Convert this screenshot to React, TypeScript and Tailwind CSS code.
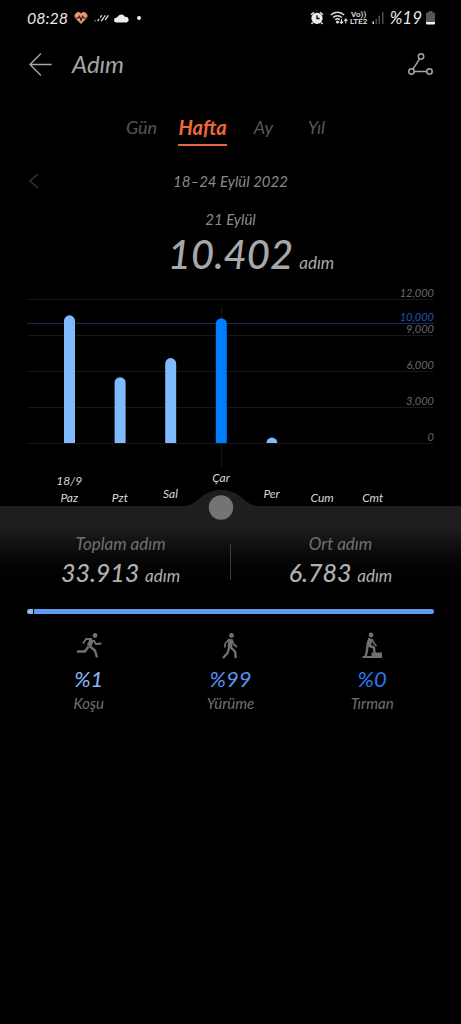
import { ReactNode, useState } from "react";
import clsx from "clsx";

const TABS = [
  { label: "Gün", width: "w-[58px]" },
  { label: "Hafta", width: "w-16" },
  { label: "Ay", width: "w-[58px]" },
  { label: "Yıl", width: "w-12" },
];

const DAYS = [
  { label: "Paz", date: "18/9", steps: 10640, lift: "pb-0" },
  { label: "Pzt", steps: 5480, lift: "pb-0" },
  { label: "Sal", steps: 7080, lift: "pb-1" },
  { label: "Çar", steps: 10402, lift: "pb-5", selected: true },
  { label: "Per", steps: 450, lift: "pb-1" },
  { label: "Cum", steps: 0, lift: "pb-0" },
  { label: "Cmt", steps: 0, lift: "pb-0" },
];

const TICKS = [12000, 9000, 6000, 3000, 0];
const GOAL = 10000;

// chart units: 3000 steps are 36 units high
const BASELINE = 160;
const toY = (steps: number) => BASELINE - (steps / 3000) * 36;
const format = (value: number) => value.toLocaleString("en-US");

function barPath(index: number, steps: number) {
  const x = 37 + index * 50.6;
  const top = toY(steps);
  const r = Math.min(5.5, BASELINE - top);
  return `M${x} ${BASELINE}V${top + r}a5.5 ${r} 0 0 1 11 0V${BASELINE}z`;
}

function StatusBar() {
  return (
    <div className="flex h-[35px] items-center justify-between pr-[26px] pl-[27px] text-[#e8e8e8]">
      <div className="flex items-center">
        <span className="w-[47px] text-base">08:28</span>
        <svg className="h-3.5 w-[14px]" viewBox="0 0 14 14" aria-hidden="true">
          <path d="M7 13 1.6 7.4A3.5 3.5 0 0 1 7 2.5a3.5 3.5 0 0 1 5.4 4.9z" fill="#e39a70" />
          <path d="M0 7h4.3l1.2-1.8L7 9.3l1.6-4 1 1.7H14" fill="none" stroke="#3b1d14" strokeWidth="1.2" />
        </svg>
        <svg className="ml-1.5 h-3 w-4" viewBox="0 0 16 12" stroke="#d8d8d8" strokeWidth="1.3" strokeLinecap="round" aria-hidden="true">
          <path d="M1 8.8h.1M4 8.5l.8-1.1M6.5 5l1-1.3M7.5 8.8l2.2-3.2M10.5 4.5l.5-.7M11.5 7.5l2.7-3.8" />
        </svg>
        <svg className="ml-1 h-3 w-[15px]" viewBox="0 0 15 12" fill="#ececec" aria-hidden="true">
          <path d="M2.5 10.500a2.400 2.400 0 0 1-.2-4.800 2.400 2.400 0 0 1 1.700-1.200A3.800 3.800 0 0 1 11 5a2.800 2.800 0 0 1 1.500 5.500z" />
        </svg>
        <span className="ml-2 size-1 rounded-full bg-[#f0f0f0]" />
      </div>

      <div className="flex items-center">
        <svg className="size-[14px]" viewBox="0 0 14 14" aria-hidden="true">
          <path d="m1 3.8 3-2.6M13 3.8l-3-2.6M2.8 11.5 1.5 13M11.2 11.5l1.3 1.5" stroke="#ececec" strokeWidth="1.5" />
          <circle cx="7" cy="7.3" r="5.6" fill="#ececec" />
          <path d="M7 4.2v3.3h2.6" fill="none" stroke="#000" strokeWidth="1.3" />
        </svg>
        <svg className="ml-1.5 h-[15px] w-[18px]" viewBox="0 0 18 15" fill="none" stroke="#dcdcdc" strokeWidth="1.5" aria-hidden="true">
          <path d="M.8 5a9.5 9.5 0 0 1 13.400 0M3.100 7.500a6.200 6.200 0 0 1 8.800 0M5.300 9.800a3 3 0 0 1 4.400 0" />
          <circle cx="7.5" cy="12" r=".8" fill="#dcdcdc" />
          <path d="M11.5 9v4.500m-1.700-1.800 1.700 1.800 1.700-1.800M15.800 13.500V9m-1.700 1.800L15.800 9l1.700 1.800" strokeWidth="1.1" />
        </svg>
        <span className="ml-0.5 flex w-[18px] flex-col items-center font-[Roboto,sans-serif] text-[8px] leading-[7px] font-medium not-italic">
          <span>Vo))</span>
          <span>LTE2</span>
        </span>
        <svg className="ml-1 h-3 w-3" viewBox="0 0 12 12" aria-hidden="true">
          <path d="M.5 9.500H2V12H.5z" fill="#dcdcdc" />
          <path d="M3.500 7H5v5H3.500zM6.500 4H8v8H6.500zM10 0h1.500v12H10z" fill="#4d4d4d" />
        </svg>
        <span className="mr-1 ml-1.5 text-[17px]">%19</span>
        <svg className="h-[14px] w-[9px]" viewBox="0 0 9 14" aria-hidden="true">
          <path d="M2.500 0h4v1.500H8q1 0 1 1V11H0V2.500q0-1 1-1h1.500z" fill="#555" />
          <path d="M0 11h9v1.500q0 1-1 1H1q-1 0-1-1z" fill="#f2f2f2" />
        </svg>
      </div>
    </div>
  );
}

function Header() {
  return (
    <header className="flex h-[58px] items-center pr-7 pl-[29px]">
      <button type="button" aria-label="Geri">
        <svg className="h-6 w-[23px]" viewBox="0 0 23 24" fill="none" stroke="#a6a6a6" strokeWidth="1.5" strokeLinecap="round" aria-hidden="true">
          <path d="M22 12.500H1M11.500 2 1 12.500 11.500 23" />
        </svg>
      </button>
      <h1 className="ml-5 text-2xl text-[#a6a6a6]">Adım</h1>
      <button type="button" className="ml-auto" aria-label="Paylaş">
        <svg className="h-[22px] w-[25px]" viewBox="0 0 25 22" fill="none" stroke="#a6a6a6" strokeWidth="1.5" aria-hidden="true">
          <circle cx="13" cy="3.500" r="2.700" />
          <circle cx="3.500" cy="18.500" r="2.700" />
          <circle cx="21.500" cy="18.500" r="2.700" />
          <path d="M11.600 5.900 5 16.200M6.200 18.500h12.600" />
        </svg>
      </button>
    </header>
  );
}

function Tabs() {
  const [active, setActive] = useState("Hafta");

  return (
    <nav className="mt-[18px] flex justify-center pr-2">
      {TABS.map(({ label, width }) => (
        <button
          key={label}
          type="button"
          onClick={() => setActive(label)}
          className={clsx("flex justify-center italic", width, active === label ? "text-xl font-bold text-[#f0693c]" : "text-lg text-[#565656]")}
        >
          <span className={clsx("border-b-2 leading-[33px]", active === label ? "border-[#e8683f]" : "border-transparent")}>{label}</span>
        </button>
      ))}
    </nav>
  );
}

function StepsChart() {
  return (
    <svg className="block w-full" viewBox="0 0 407 184" role="img" aria-label="Haftalık adım">
      {TICKS.map((tick) => (
        <g key={tick}>
          <path d={`M1 ${toY(tick) + 0.5}h405`} stroke="#171919" />
          <text x="407" y={toY(tick) - 2} textAnchor="end" fontSize="11" fill="#6a6a6a">{format(tick)}</text>
        </g>
      ))}
      <path d="M194.500 24v160" stroke="#0d1722" />
      <path d={`M0 ${toY(GOAL) + 0.5}h407`} stroke="#192763" />
      <text x="407" y={toY(GOAL) - 2} textAnchor="end" fontSize="11" fill="#2453b8">{format(GOAL)}</text>
      {DAYS.map((day, i) => day.steps > 0 && (
        <path key={day.label} d={barPath(i, day.steps)} fill={day.selected ? "#007dff" : "#7fbaff"} />
      ))}
    </svg>
  );
}

function DayLabels() {
  return (
    <div className="mr-9 ml-[17px] grid h-[39px] grid-cols-7">
      {DAYS.map((day) => (
        <div key={day.label} className={clsx("relative flex flex-col items-center justify-end text-xs leading-[17px] text-[#d8d8d8]", day.lift)}>
          {day.date && <span>{day.date}</span>}
          <span className="relative z-10">{day.label}</span>
          {day.selected && (
            <svg className="absolute top-[23px] left-1/2 h-9 w-[84px] -translate-x-1/2" viewBox="0 0 84 36" aria-hidden="true">
              <path d="M0 16.500c14 0 17-6 24-11Q32 0 42 0t18 5.500c7 5 10 11 24 11z" fill="#1e1e1e" />
              <circle cx="42" cy="17.500" r="12.200" fill="#747474" />
            </svg>
          )}
        </div>
      ))}
    </div>
  );
}

function Total({ label, value }: { label: string; value: string }) {
  return (
    <div className="flex flex-col items-center">
      <span className="text-[17px] leading-6 text-[#707070]">{label}</span>
      <span className="text-[25px] leading-8 font-medium text-[#b0b0b0]">
        {value} <span className="text-[17px] font-normal">adım</span>
      </span>
    </div>
  );
}

function Activity({ label, value, color, children }: { label: string; value: string; color: string; children: ReactNode }) {
  return (
    <div className="flex flex-col items-center">
      <svg className="h-7 w-7" viewBox="0 0 28 28" fill="none" stroke="#707070" strokeWidth="2.4" strokeLinejoin="round" aria-hidden="true">
        {children}
      </svg>
      <span className={clsx("mt-1 text-[22px] leading-8", color)}>{value}</span>
      <span className="text-[15px] leading-4 text-[#707070]">{label}</span>
    </div>
  );
}

export default function App() {
  return (
    <div className="min-h-screen bg-black font-[Lato,'Open_Sans',sans-serif] italic">
      <StatusBar />
      <Header />
      <Tabs />

      <main>
        <div className="mt-[19px] flex h-8 items-center px-7">
          <button type="button" aria-label="Önceki hafta">
            <svg className="h-4 w-3" viewBox="0 0 12 16" fill="none" stroke="#333" strokeWidth="1.6" aria-hidden="true">
              <path d="M10 1 2 8l8 7" />
            </svg>
          </button>
          <span className="flex-1 pr-3 text-center text-[15px] text-[#8a8a8a]">18–24 Eylül 2022</span>
        </div>

        <div className="mt-3 text-center text-[15px] leading-5 text-[#8a8a8a]">21 Eylül</div>
        <div className="grid grid-cols-[1fr_auto_1fr] items-baseline gap-1.5 text-[#a8a8a8]">
          <span className="col-start-2 text-[40px] leading-[50px] font-medium">10.402</span>
          <span className="text-[17px]">adım</span>
        </div>

        <div className="mt-1 px-[27px]">
          <StepsChart />
          <DayLabels />
        </div>

        <section className="bg-linear-to-b from-[#1e1e1e] from-20% to-black to-90% px-[27px] pt-[26px] pb-[17px]">
          <div className="flex items-center">
            <div className="flex-1 pr-4"><Total label="Toplam adım" value="33.913" /></div>
            <div className="h-9 w-px bg-[#3c3c3c]" />
            <div className="flex-1 pl-4"><Total label="Ort adım" value="6.783" /></div>
          </div>
        </section>

        <div className="flex gap-px px-[27px]">
          <div className="h-[5px] w-1.5 rounded-l-full bg-[#8fb8f5]" />
          <div className="h-[5px] flex-1 rounded-r-full bg-[#5f9cf0]" />
        </div>

        <section className="mt-[17px] grid grid-cols-3 px-[18px]">
          <Activity label="Koşu" value="%1" color="text-[#8db4f4]">
            <circle cx="20" cy="4.500" r="2.400" fill="#707070" stroke="none" />
            <path d="m17 8.500-3 6.500" strokeWidth="4.6" />
            <path d="M17 8h-6l-3 4.500M18.500 9l2.500 4 5.500-.5" strokeWidth="1.8" />
            <path d="m13.500 15.500-3.500 5H2M14.500 15l5.500 4.500 2 7" />
          </Activity>
          <Activity label="Yürüme" value="%99" color="text-[#5d90ec]">
            <circle cx="15.500" cy="4.500" r="2.400" fill="#707070" stroke="none" />
            <path d="m14.500 8.200-.5 8" strokeWidth="4.6" />
            <path d="m13.500 8-4.300 4.500-.4 4M16 9l2 4.500 3 2.500" strokeWidth="1.7" />
            <path d="m13.500 15.500-2 6.500-4.500 5M14 15.500l5 5 .8 6.500" />
          </Activity>
          <Activity label="Tırman" value="%0" color="text-[#2d77f0]">
            <circle cx="13" cy="4" r="2.400" fill="#707070" stroke="none" />
            <path d="m12.500 7.500-2 6.500" strokeWidth="4.6" />
            <path d="m14 8 2 4.500 2.500 2.500" strokeWidth="1.7" />
            <path d="M9.500 13.500 9 19.500 7.500 26M10.500 14.500l5.500 2 .5 5.500" />
            <path d="M4.500 25h9v-3.500H24V27H4.500z" fill="#707070" stroke="none" />
          </Activity>
        </section>
      </main>
    </div>
  );
}
